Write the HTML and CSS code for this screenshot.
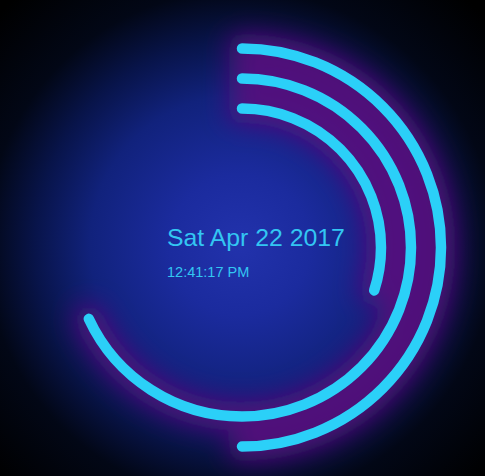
FILE: index.html
```html
<!DOCTYPE html>
<html>
<head>
<meta charset="utf-8">
<link rel="stylesheet" href="styles.css">
</head>
<body>
<main class="clock">
  <svg class="rings" width="485" height="476" viewBox="0 0 485 476">
    <defs>
      <filter id="soft" x="-40%" y="-40%" width="180%" height="180%">
        <feGaussianBlur stdDeviation="13"/>
      </filter>
    </defs>
    <g class="glow" filter="url(#soft)" transform="rotate(-90 242 247.5)">
      <circle class="halo" cx="242" cy="247.5" r="199" pathLength="360" stroke-dasharray="180 400"/>
      <circle class="halo" cx="242" cy="247.5" r="169" pathLength="360" stroke-dasharray="245 400"/>
      <circle class="halo" cx="242" cy="247.5" r="139" pathLength="360" stroke-dasharray="108 400"/>
    </g>
    <g class="arcs" transform="rotate(-90 242 247.5)">
      <circle class="arc" cx="242" cy="247.5" r="199" pathLength="360" stroke-dasharray="180 400"/>
      <circle class="arc" cx="242" cy="247.5" r="169" pathLength="360" stroke-dasharray="245 400"/>
      <circle class="arc" cx="242" cy="247.5" r="139" pathLength="360" stroke-dasharray="108 400"/>
    </g>
  </svg>
  <div class="readout">
    <div class="date">Sat Apr 22 2017</div>
    <div class="time">12:41:17 PM</div>
  </div>
</main>
</body>
</html>
```
FILE: styles.css
```css
html, body {
  margin: 0;
  padding: 0;
}
body {
  width: 485px;
  height: 476px;
  overflow: hidden;
  background: radial-gradient(circle at 240px 245px, #2232ac 0px, #1b2b9e 70px, #11227c 150px, #08144a 205px, #020716 255px, #000 335px);
  font-family: "Liberation Sans", Arial, sans-serif;
}
.clock {
  display: grid;
  width: 485px;
  height: 476px;
}
.rings, .readout {
  grid-area: 1 / 1;
}
.halo {
  fill: none;
  stroke: #58127e;
  stroke-width: 28;
  stroke-linecap: round;
  opacity: 0.95;
}
.arc {
  fill: none;
  stroke: #2bd0f8;
  stroke-width: 10.5;
  stroke-linecap: round;
}
.readout {
  padding: 224px 0 0 167px;
  color: #33c6f2;
}
.date {
  font-size: 24.8px;
  line-height: 28px;
}
.time {
  margin-top: 12px;
  font-size: 14.5px;
  line-height: 16px;
}
```
